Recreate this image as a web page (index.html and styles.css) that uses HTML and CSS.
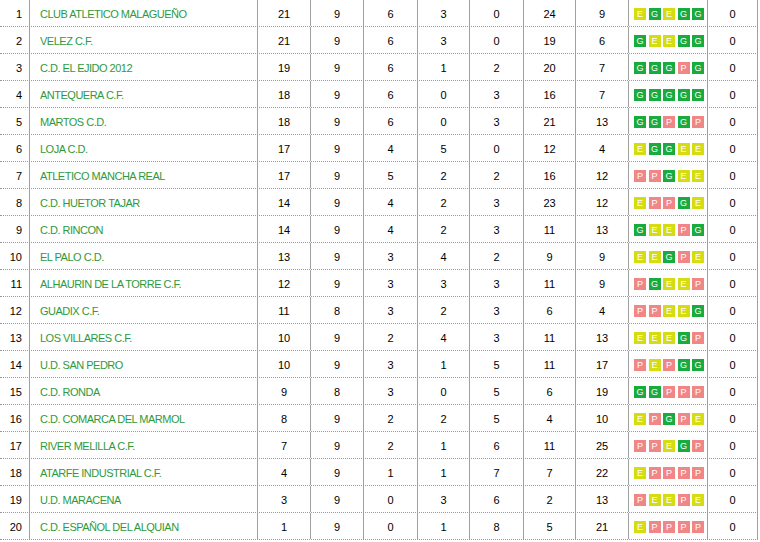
FILE: index.html
```html
<!DOCTYPE html>
<html lang="es">
<head>
<meta charset="utf-8">
<title>Clasificación</title>
<link rel="stylesheet" href="styles.css">
</head>
<body>
<div class="standings">
  <div class="row"><div class="c pos">1</div><div class="c team">CLUB ATLETICO MALAGUEÑO</div><div class="c">21</div><div class="c">9</div><div class="c">6</div><div class="c">3</div><div class="c">0</div><div class="c">24</div><div class="c">9</div><div class="c form"><span class="b e">E</span><span class="b g">G</span><span class="b e">E</span><span class="b g">G</span><span class="b g">G</span></div><div class="c last">0</div></div>
  <div class="row"><div class="c pos">2</div><div class="c team">VELEZ C.F.</div><div class="c">21</div><div class="c">9</div><div class="c">6</div><div class="c">3</div><div class="c">0</div><div class="c">19</div><div class="c">6</div><div class="c form"><span class="b g">G</span><span class="b e">E</span><span class="b e">E</span><span class="b g">G</span><span class="b g">G</span></div><div class="c last">0</div></div>
  <div class="row"><div class="c pos">3</div><div class="c team">C.D. EL EJIDO 2012</div><div class="c">19</div><div class="c">9</div><div class="c">6</div><div class="c">1</div><div class="c">2</div><div class="c">20</div><div class="c">7</div><div class="c form"><span class="b g">G</span><span class="b g">G</span><span class="b g">G</span><span class="b p">P</span><span class="b g">G</span></div><div class="c last">0</div></div>
  <div class="row"><div class="c pos">4</div><div class="c team">ANTEQUERA C.F.</div><div class="c">18</div><div class="c">9</div><div class="c">6</div><div class="c">0</div><div class="c">3</div><div class="c">16</div><div class="c">7</div><div class="c form"><span class="b g">G</span><span class="b g">G</span><span class="b g">G</span><span class="b g">G</span><span class="b g">G</span></div><div class="c last">0</div></div>
  <div class="row"><div class="c pos">5</div><div class="c team">MARTOS C.D.</div><div class="c">18</div><div class="c">9</div><div class="c">6</div><div class="c">0</div><div class="c">3</div><div class="c">21</div><div class="c">13</div><div class="c form"><span class="b g">G</span><span class="b g">G</span><span class="b p">P</span><span class="b g">G</span><span class="b p">P</span></div><div class="c last">0</div></div>
  <div class="row"><div class="c pos">6</div><div class="c team">LOJA C.D.</div><div class="c">17</div><div class="c">9</div><div class="c">4</div><div class="c">5</div><div class="c">0</div><div class="c">12</div><div class="c">4</div><div class="c form"><span class="b e">E</span><span class="b g">G</span><span class="b g">G</span><span class="b e">E</span><span class="b e">E</span></div><div class="c last">0</div></div>
  <div class="row"><div class="c pos">7</div><div class="c team">ATLETICO MANCHA REAL</div><div class="c">17</div><div class="c">9</div><div class="c">5</div><div class="c">2</div><div class="c">2</div><div class="c">16</div><div class="c">12</div><div class="c form"><span class="b p">P</span><span class="b p">P</span><span class="b g">G</span><span class="b e">E</span><span class="b e">E</span></div><div class="c last">0</div></div>
  <div class="row"><div class="c pos">8</div><div class="c team">C.D. HUETOR TAJAR</div><div class="c">14</div><div class="c">9</div><div class="c">4</div><div class="c">2</div><div class="c">3</div><div class="c">23</div><div class="c">12</div><div class="c form"><span class="b e">E</span><span class="b p">P</span><span class="b p">P</span><span class="b g">G</span><span class="b e">E</span></div><div class="c last">0</div></div>
  <div class="row"><div class="c pos">9</div><div class="c team">C.D. RINCON</div><div class="c">14</div><div class="c">9</div><div class="c">4</div><div class="c">2</div><div class="c">3</div><div class="c">11</div><div class="c">13</div><div class="c form"><span class="b g">G</span><span class="b e">E</span><span class="b e">E</span><span class="b p">P</span><span class="b g">G</span></div><div class="c last">0</div></div>
  <div class="row"><div class="c pos">10</div><div class="c team">EL PALO C.D.</div><div class="c">13</div><div class="c">9</div><div class="c">3</div><div class="c">4</div><div class="c">2</div><div class="c">9</div><div class="c">9</div><div class="c form"><span class="b e">E</span><span class="b e">E</span><span class="b g">G</span><span class="b p">P</span><span class="b e">E</span></div><div class="c last">0</div></div>
  <div class="row"><div class="c pos">11</div><div class="c team">ALHAURIN DE LA TORRE C.F.</div><div class="c">12</div><div class="c">9</div><div class="c">3</div><div class="c">3</div><div class="c">3</div><div class="c">11</div><div class="c">9</div><div class="c form"><span class="b p">P</span><span class="b g">G</span><span class="b e">E</span><span class="b e">E</span><span class="b p">P</span></div><div class="c last">0</div></div>
  <div class="row"><div class="c pos">12</div><div class="c team">GUADIX C.F.</div><div class="c">11</div><div class="c">8</div><div class="c">3</div><div class="c">2</div><div class="c">3</div><div class="c">6</div><div class="c">4</div><div class="c form"><span class="b p">P</span><span class="b p">P</span><span class="b e">E</span><span class="b e">E</span><span class="b g">G</span></div><div class="c last">0</div></div>
  <div class="row"><div class="c pos">13</div><div class="c team">LOS VILLARES C.F.</div><div class="c">10</div><div class="c">9</div><div class="c">2</div><div class="c">4</div><div class="c">3</div><div class="c">11</div><div class="c">13</div><div class="c form"><span class="b e">E</span><span class="b e">E</span><span class="b e">E</span><span class="b g">G</span><span class="b p">P</span></div><div class="c last">0</div></div>
  <div class="row"><div class="c pos">14</div><div class="c team">U.D. SAN PEDRO</div><div class="c">10</div><div class="c">9</div><div class="c">3</div><div class="c">1</div><div class="c">5</div><div class="c">11</div><div class="c">17</div><div class="c form"><span class="b p">P</span><span class="b e">E</span><span class="b p">P</span><span class="b g">G</span><span class="b g">G</span></div><div class="c last">0</div></div>
  <div class="row"><div class="c pos">15</div><div class="c team">C.D. RONDA</div><div class="c">9</div><div class="c">8</div><div class="c">3</div><div class="c">0</div><div class="c">5</div><div class="c">6</div><div class="c">19</div><div class="c form"><span class="b g">G</span><span class="b g">G</span><span class="b p">P</span><span class="b p">P</span><span class="b p">P</span></div><div class="c last">0</div></div>
  <div class="row"><div class="c pos">16</div><div class="c team">C.D. COMARCA DEL MARMOL</div><div class="c">8</div><div class="c">9</div><div class="c">2</div><div class="c">2</div><div class="c">5</div><div class="c">4</div><div class="c">10</div><div class="c form"><span class="b e">E</span><span class="b p">P</span><span class="b g">G</span><span class="b p">P</span><span class="b e">E</span></div><div class="c last">0</div></div>
  <div class="row"><div class="c pos">17</div><div class="c team">RIVER MELILLA C.F.</div><div class="c">7</div><div class="c">9</div><div class="c">2</div><div class="c">1</div><div class="c">6</div><div class="c">11</div><div class="c">25</div><div class="c form"><span class="b p">P</span><span class="b p">P</span><span class="b e">E</span><span class="b g">G</span><span class="b p">P</span></div><div class="c last">0</div></div>
  <div class="row"><div class="c pos">18</div><div class="c team">ATARFE INDUSTRIAL C.F.</div><div class="c">4</div><div class="c">9</div><div class="c">1</div><div class="c">1</div><div class="c">7</div><div class="c">7</div><div class="c">22</div><div class="c form"><span class="b e">E</span><span class="b p">P</span><span class="b p">P</span><span class="b p">P</span><span class="b p">P</span></div><div class="c last">0</div></div>
  <div class="row"><div class="c pos">19</div><div class="c team">U.D. MARACENA</div><div class="c">3</div><div class="c">9</div><div class="c">0</div><div class="c">3</div><div class="c">6</div><div class="c">2</div><div class="c">13</div><div class="c form"><span class="b p">P</span><span class="b e">E</span><span class="b e">E</span><span class="b p">P</span><span class="b e">E</span></div><div class="c last">0</div></div>
  <div class="row"><div class="c pos">20</div><div class="c team">C.D. ESPAÑOL DEL ALQUIAN</div><div class="c">1</div><div class="c">9</div><div class="c">0</div><div class="c">1</div><div class="c">8</div><div class="c">5</div><div class="c">21</div><div class="c form"><span class="b e">E</span><span class="b p">P</span><span class="b p">P</span><span class="b p">P</span><span class="b p">P</span></div><div class="c last">0</div></div>
</div>
</body>
</html>
```

FILE: styles.css
```css
html, body {
  margin: 0;
  padding: 0;
  background: #ffffff;
}

.standings {
  width: 758px;
  font-family: "Liberation Sans", Arial, sans-serif;
  font-size: 11px;
  color: #000000;
}

.row {
  display: grid;
  grid-template-columns: 29px 228px 53px 53px 54px 52px 54px 52px 53px 79px 51px;
  height: 27px;
  box-sizing: border-box;
  border-bottom: 1px dotted #9a9a9a;
}

.c {
  box-sizing: border-box;
  border-left: 1px solid #a0a0a0;
  display: flex;
  align-items: center;
  justify-content: center;
  padding-top: 2px;
}

.c.pos {
  border-left: none;
  justify-content: flex-end;
  padding-right: 7px;
}

.c.team {
  justify-content: flex-start;
  padding-left: 10px;
  color: #2f9a3c;
  letter-spacing: -0.5px;
}

.c.last {
  border-right: 1px solid #a0a0a0;
}

.c.form {
  gap: 2.5px;
  padding-left: 2px;
  padding-top: 2px;
}

.b {
  width: 12px;
  height: 12px;
  display: flex;
  align-items: center;
  justify-content: center;
  color: #ffffff;
  font-size: 9px;
  line-height: 1;
}

.b.g { background: #1aab3e; }
.b.e { background: #d5dc12; }
.b.p { background: #f08686; }
```
